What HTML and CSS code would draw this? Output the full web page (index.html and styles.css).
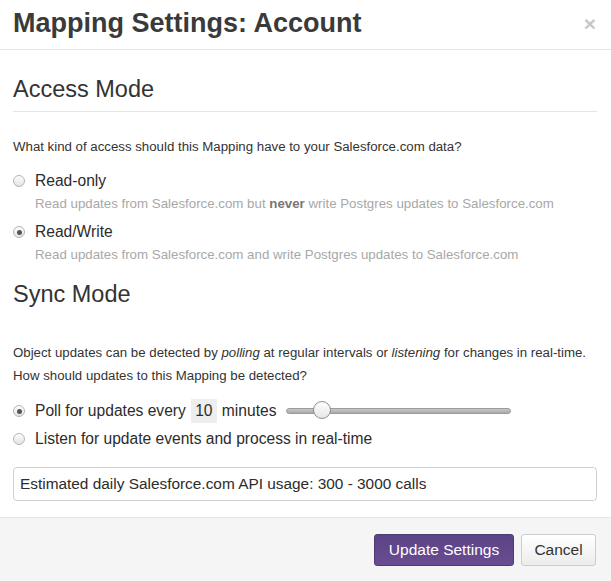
FILE: index.html
```html
<!DOCTYPE html>
<html>
<head>
<meta charset="utf-8">
<link rel="stylesheet" href="styles.css">
</head>
<body>
<div class="modal">
  <div class="modal-header">
    <h2 class="title">Mapping Settings: Account</h2>
    <span class="close">&times;</span>
  </div>
  <div class="modal-body">
    <h3 class="section">Access Mode</h3>
    <p class="text first">What kind of access should this Mapping have to your Salesforce.com data?</p>
    <div class="option">
      <span class="radio"></span>
      <span class="label">Read-only</span>
    </div>
    <p class="hint">Read updates from Salesforce.com but <b>never</b> write Postgres updates to Salesforce.com</p>
    <div class="option">
      <span class="radio checked"></span>
      <span class="label">Read/Write</span>
    </div>
    <p class="hint">Read updates from Salesforce.com and write Postgres updates to Salesforce.com</p>

    <h3 class="section sync">Sync Mode</h3>
    <p class="text first-sync">Object updates can be detected by <i>polling</i> at regular intervals or <i>listening</i> for changes in real-time.</p>
    <p class="text">How should updates to this Mapping be detected?</p>
    <div class="option poll">
      <span class="radio checked"></span>
      <span class="label">Poll for updates every <span class="num">10</span> minutes</span>
      <span class="slider"><span class="thumb"></span></span>
    </div>
    <div class="option listen">
      <span class="radio"></span>
      <span class="label">Listen for update events and process in real-time</span>
    </div>
    <div class="estimate">Estimated daily Salesforce.com API usage: 300 - 3000 calls</div>
  </div>
  <div class="modal-footer">
    <button class="btn primary">Update Settings</button>
    <button class="btn default">Cancel</button>
  </div>
</div>
</body>
</html>
```
FILE: styles.css
```css
* { box-sizing: border-box; }
html, body { margin: 0; padding: 0; background: #fff; }
body {
  font-family: "Liberation Sans", Arial, sans-serif;
  color: #333;
  width: 611px;
  height: 581px;
  overflow: hidden;
}
.modal { width: 611px; display: flex; flex-direction: column; height: 581px; }
.modal-header {
  height: 50px;
  border-bottom: 1px solid #e5e5e5;
  display: flex;
  align-items: center;
  justify-content: space-between;
  padding: 0 15px 3px 13px;
}
.title {
  margin: 0;
  font-size: 27px;
  font-weight: bold;
  color: #3a3a3a;
}
.close {
  font-size: 21px;
  font-weight: bold;
  color: #c8c8c8;
  line-height: 1;
}
.modal-body {
  padding: 0 14px 0 13px;
  flex: 1;
}
.section {
  margin: 0;
  font-size: 23.5px;
  font-weight: normal;
  color: #333;
  padding-top: 26px;
  padding-bottom: 9px;
  border-bottom: 1px solid #e5e5e5;
  line-height: 26px;
}
.section.sync { padding-top: 11px; border-bottom: none; padding-bottom: 0; }
.text {
  margin: 0;
  font-size: 13.25px;
  line-height: 23px;
  color: #333;
}
.text.first { margin-top: 23px; }
.text.first-sync { margin-top: 34px; }
.option {
  display: flex;
  align-items: center;
  height: 26px;
  font-size: 15.6px;
}
.text.first + .option { margin-top: 10px; }
.label { color: #2c2c2c; margin-left: 10px; }
.radio {
  width: 12px;
  height: 12px;
  border-radius: 50%;
  border: 1px solid #b5b5b5;
  background: linear-gradient(#fdfdfd, #e4e4e4);
  flex: none;
  display: flex;
  align-items: center;
  justify-content: center;
}
.radio.checked::after {
  content: "";
  width: 5px;
  height: 5px;
  border-radius: 50%;
  background: #555;
}
.hint {
  margin: 0 0 5px;
  font-size: 13.3px;
  line-height: 20px;
  color: #a8a8a8;
  padding-left: 22px;
}
.hint b { color: #777; }
.option.poll { margin-top: 10px; height: 28px; }
.option.listen { height: 28px; }
.num {
  display: inline-block;
  background: #eee;
  padding: 3px 4px;
  margin: 0 1px;
}
.slider {
  position: relative;
  margin-left: 10px;
  width: 225px;
  height: 6px;
  border-radius: 3px;
  border: 1px solid #9c9c9c;
  background: linear-gradient(#c8c8c8, #a9a9a9);
}
.thumb {
  position: absolute;
  left: 26px;
  top: -8px;
  width: 18px;
  height: 18px;
  border-radius: 50%;
  border: 1px solid #8f8f8f;
  background: linear-gradient(#fff, #e6e6e6);
}
.estimate {
  margin-top: 14px;
  height: 34px;
  border: 1px solid #cfcfcf;
  border-radius: 4px;
  font-size: 15.4px;
  display: flex;
  align-items: center;
  padding: 0 6px;
  color: #2c2c2c;
}
.modal-footer {
  border-top: 1px solid #e5e5e5;
  background: #f5f5f5;
  height: 64px;
  display: flex;
  justify-content: flex-end;
  align-items: flex-start;
  padding: 16px 15px 0 0;
  gap: 7px;
}
.btn {
  font-family: "Liberation Sans", Arial, sans-serif;
  font-size: 15.5px;
  height: 32px;
  border-radius: 3px;
  padding: 0;
}
.primary {
  background: linear-gradient(#5b4485, #6a4c92);
  border: 1px solid #4e3a74;
  color: #fff;
  width: 140px;
}
.default {
  background: linear-gradient(#fff, #ececec);
  border: 1px solid #cdcdcd;
  color: #333;
  width: 75px;
}
```
